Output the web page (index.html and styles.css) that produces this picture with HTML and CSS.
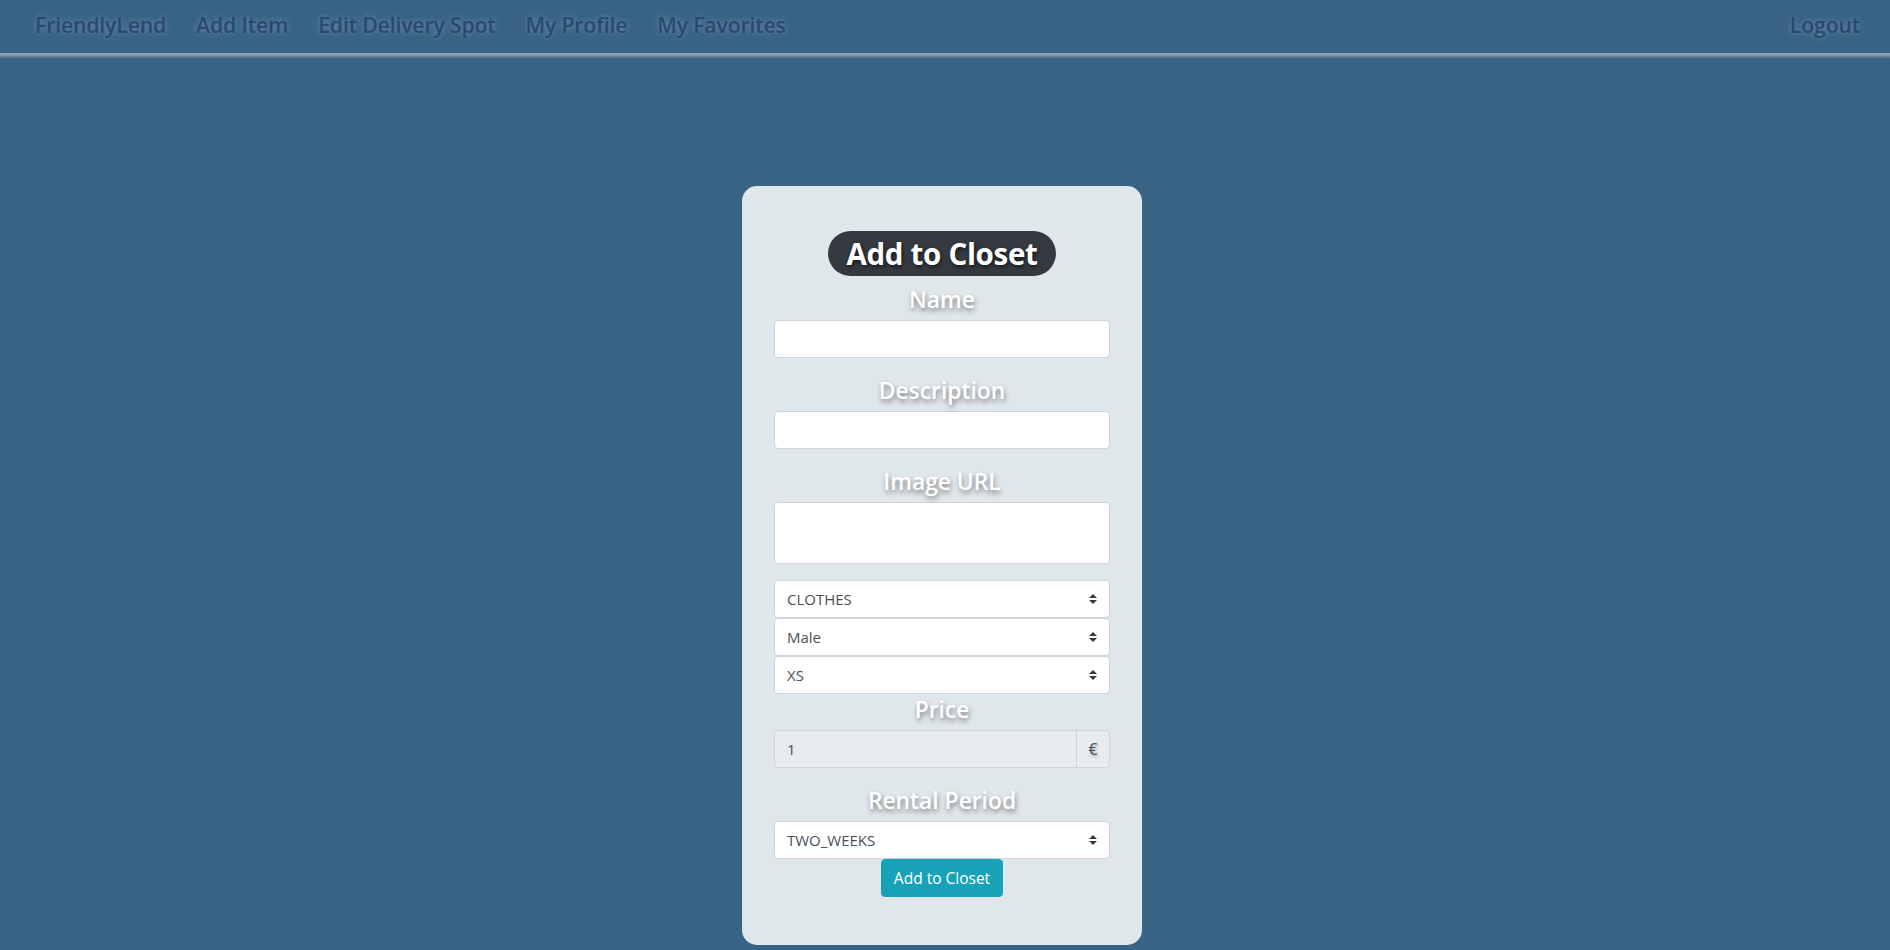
FILE: index.html
```html
<!DOCTYPE html>
<html lang="en">
<head>
<meta charset="utf-8">
<title>FriendlyLend - Add Item</title>
<link rel="stylesheet" href="styles.css">
</head>
<body>
<nav class="navbar">
  <div class="nav-links">
    <a class="nav-link" href="#">FriendlyLend</a>
    <a class="nav-link" href="#">Add Item</a>
    <a class="nav-link" href="#">Edit Delivery Spot</a>
    <a class="nav-link" href="#">My Profile</a>
    <a class="nav-link" href="#">My Favorites</a>
  </div>
  <div class="nav-links">
    <a class="nav-link" href="#">Logout</a>
  </div>
</nav>
<div class="nav-rule"></div>
<main class="page">
  <form class="card">
    <h2 class="card-title">Add to Closet</h2>
    <div class="form-group">
      <label class="field-label">Name</label>
      <input class="form-control" type="text">
    </div>
    <div class="form-group">
      <label class="field-label">Description</label>
      <input class="form-control" type="text">
    </div>
    <div class="form-group form-group-last">
      <label class="field-label">Image URL</label>
      <textarea class="form-control textarea" rows="2"></textarea>
    </div>
    <div class="select-stack">
      <div class="select-wrap">
        <select class="custom-select"><option>CLOTHES</option></select>
        <svg class="select-arrow" viewBox="0 0 4 5" width="8" height="10"><path fill="#343a40" d="M2 0L0 2h4zm0 5L0 3h4z"/></svg>
      </div>
      <div class="select-wrap">
        <select class="custom-select"><option>Male</option></select>
        <svg class="select-arrow" viewBox="0 0 4 5" width="8" height="10"><path fill="#343a40" d="M2 0L0 2h4zm0 5L0 3h4z"/></svg>
      </div>
      <div class="select-wrap">
        <select class="custom-select"><option>XS</option></select>
        <svg class="select-arrow" viewBox="0 0 4 5" width="8" height="10"><path fill="#343a40" d="M2 0L0 2h4zm0 5L0 3h4z"/></svg>
      </div>
    </div>
    <div class="form-group">
      <label class="field-label">Price</label>
      <div class="input-group">
        <input class="form-control group-input" type="text" value="1" disabled>
        <span class="input-group-text">€</span>
      </div>
    </div>
    <div class="form-group-tight">
      <label class="field-label">Rental Period</label>
      <div class="select-wrap">
        <select class="custom-select"><option>TWO_WEEKS</option></select>
        <svg class="select-arrow" viewBox="0 0 4 5" width="8" height="10"><path fill="#343a40" d="M2 0L0 2h4zm0 5L0 3h4z"/></svg>
      </div>
    </div>
    <button class="btn-info" type="button">Add to Closet</button>
  </form>
</main>
</body>
</html>
```
FILE: styles.css
```css
html, body {
  margin: 0;
  padding: 0;
}
body {
  background: #386384;
  font-family: "Open Sans", "Noto Sans", sans-serif;
  min-height: 950px;
}
.navbar {
  height: 53px;
  display: flex;
  justify-content: space-between;
  align-items: center;
  padding: 0 30px 3px 35px;
  box-sizing: border-box;
}
.nav-links {
  display: flex;
  gap: 30px;
}
.nav-link {
  color: #2a4870;
  text-decoration: none;
  font-size: 21.3px;
  font-weight: 600;
  letter-spacing: -0.2px;
  text-shadow: 0 0 6px rgba(170, 200, 230, 0.45);
  line-height: 28px;
}
.nav-rule {
  height: 6px;
  background: linear-gradient(#96aabb, #8197aa 35%, #5b7d98 65%, #386384);
}
.page {
  display: flex;
  justify-content: center;
  padding: 127px 6px 0 0;
}
.card {
  width: 400px;
  box-sizing: border-box;
  background: #e0e7eb;
  border-radius: 15px;
  padding: 45px 32px 48px;
  text-align: center;
}
.card-title {
  display: inline-block;
  margin: 0 0 8px;
  height: 45px;
  line-height: 45px;
  padding: 0 18px;
  border-radius: 23px;
  background: #343a40;
  color: #fff;
  font-size: 29.5px;
  font-weight: 700;
  letter-spacing: -0.3px;
  text-shadow: 1px 2px 4px rgba(0, 0, 0, 0.6);
}
.form-group {
  margin-bottom: 17px;
}
.form-group-last {
  margin-bottom: 16px;
}
.form-group-tight {
  margin-bottom: 0;
}
.field-label {
  display: block;
  font-size: 22.8px;
  line-height: 28px;
  padding-top: 2px;
  margin-bottom: 6px;
  font-weight: 600;
  color: #fff;
  text-shadow: 1px 3px 5px rgba(0, 0, 0, 0.45);
}
.form-control {
  display: block;
  width: 100%;
  box-sizing: border-box;
  height: 38px;
  padding: 6px 12px;
  font-family: inherit;
  font-size: 15px;
  color: #495057;
  background: #fff;
  border: 1px solid #ced4da;
  border-radius: 4px;
  text-align: left;
}
.textarea {
  height: 62px;
  resize: none;
}
.select-stack {
  margin-bottom: 0;
}
.select-wrap {
  position: relative;
}
.custom-select {
  display: block;
  width: 100%;
  height: 38px;
  box-sizing: border-box;
  padding: 6px 28px 6px 12px;
  font-family: inherit;
  font-size: 15px;
  color: #495057;
  background: #fff;
  border: 1px solid #ced4da;
  border-radius: 4px;
  appearance: none;
  -webkit-appearance: none;
}
.select-arrow {
  position: absolute;
  right: 13px;
  top: 14px;
}
.input-group {
  display: flex;
}
.group-input {
  flex: 1;
  background: #e9ecef;
  border-radius: 4px 0 0 4px;
  color: #495057;
}
.input-group-text {
  display: flex;
  align-items: center;
  justify-content: center;
  width: 34px;
  box-sizing: border-box;
  height: 38px;
  margin-left: -1px;
  font-size: 16px;
  color: #495057;
  background: #e9ecef;
  border: 1px solid #ced4da;
  border-radius: 0 4px 4px 0;
  text-shadow: 1px 2px 3px rgba(0, 0, 0, 0.3);
}
.btn-info {
  display: inline-block;
  height: 38px;
  padding: 0 12px;
  font-family: inherit;
  font-size: 15.5px;
  color: #fff;
  background: #17a2b8;
  border: 1px solid #17a2b8;
  border-radius: 4px;
  vertical-align: top;
}
```
